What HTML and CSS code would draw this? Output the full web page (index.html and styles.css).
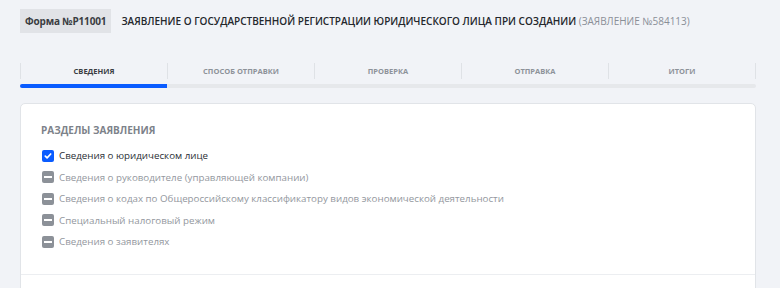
FILE: index.html
```html
<!DOCTYPE html>
<html lang="ru">
<head>
<meta charset="utf-8">
<link rel="stylesheet" href="styles.css">
</head>
<body>
<div class="page">
  <header class="head">
    <span class="badge">Форма №Р11001</span>
    <h1 class="title">ЗАЯВЛЕНИЕ О ГОСУДАРСТВЕННОЙ РЕГИСТРАЦИИ ЮРИДИЧЕСКОГО ЛИЦА ПРИ СОЗДАНИИ <span class="num">(ЗАЯВЛЕНИЕ №584113)</span></h1>
  </header>
  <nav class="steps">
    <div class="step active">СВЕДЕНИЯ</div>
    <div class="step">СПОСОБ ОТПРАВКИ</div>
    <div class="step">ПРОВЕРКА</div>
    <div class="step">ОТПРАВКА</div>
    <div class="step">ИТОГИ</div>
  </nav>
  <div class="track"><div class="fill" style="width: 20%"></div></div>
  <section class="card">
    <div class="card-body">
      <h2 class="sec-title">РАЗДЕЛЫ ЗАЯВЛЕНИЯ</h2>
      <ul class="list">
        <li class="item checked"><span class="box"><svg width="8" height="8" viewBox="0 0 8 8"><path d="M1.3 4.1 L3.1 5.9 L6.7 2" fill="none" stroke="#fff" stroke-width="1.7" stroke-linecap="round" stroke-linejoin="round"/></svg></span>Сведения о юридическом лице</li>
        <li class="item"><span class="box minus"></span>Сведения о руководителе (управляющей компании)</li>
        <li class="item"><span class="box minus"></span>Сведения о кодах по Общероссийскому классификатору видов экономической деятельности</li>
        <li class="item"><span class="box minus"></span>Специальный налоговый режим</li>
        <li class="item"><span class="box minus"></span>Сведения о заявителях</li>
      </ul>
    </div>
    <div class="card-foot"></div>
  </section>
</div>
</body>
</html>
```
FILE: styles.css
```css
* { box-sizing: border-box; }
html, body { margin: 0; padding: 0; }
body {
  background: #f1f3f7;
  font-family: "Open Sans", "Noto Sans", sans-serif;
  color: #2b2f36;
  width: 780px;
  height: 288px;
  overflow: hidden;
}
.page {
  padding: 9px 24px 0 20px;
}
.head {
  display: flex;
  align-items: center;
  gap: 10px;
  height: 24px;
}
.badge {
  flex: none;
  white-space: nowrap;
  background: #e1e3e7;
  height: 24px;
  padding: 0 5px;
  display: flex;
  align-items: center;
  font-size: 10px;
  font-weight: 700;
  letter-spacing: -0.15px;
  color: #3a3d42;
}
.title {
  margin: 0;
  font-size: 10px;
  font-weight: 600;
  color: #24272c;
  white-space: nowrap;
}
.num { color: #8a8f97; font-weight: 400; }
.steps {
  margin-top: 30px;
  display: grid;
  grid-template-columns: repeat(5, 1fr);
  border-right: 1px solid #dfe2e6;
}
.step {
  height: 16px;
  display: flex;
  align-items: center;
  justify-content: center;
  font-size: 7.5px;
  font-weight: 700;
  color: #8d9299;
  border-left: 1px solid #dfe2e6;
}
.step.active { color: #3a3d42; }
.track {
  margin-top: 5px;
  height: 4px;
  background: #e6e8eb;
  border-radius: 2px;
}
.fill {
  height: 100%;
  background: #0a5cff;
  border-radius: 2px 0 0 2px;
}
.card {
  margin-top: 15px;
  background: #fff;
  border: 1px solid #e1e4e8;
  border-radius: 5px;
}
.card-body { padding: 19px 20px 21px; }
.sec-title {
  margin: 0 0 8px;
  font-size: 10px;
  font-weight: 700;
  color: #7d828a;
  line-height: 14px;
}
.list { list-style: none; margin: 0; padding: 0; }
.item {
  display: flex;
  align-items: center;
  gap: 5px;
  height: 21.5px;
  font-size: 9.75px;
  color: #93979e;
  white-space: nowrap;
}
.item.checked { color: #2b2f36; }
.box {
  width: 12px;
  height: 12px;
  border-radius: 2px;
  background: #8c9198;
  display: flex;
  align-items: center;
  justify-content: center;
  flex: none;
  margin-left: 1px;
}
.checked .box { background: #0a5cff; }
.box.minus::before {
  content: "";
  width: 8px;
  height: 2px;
  background: #fff;
}
.card-foot {
  border-top: 1px solid #eceef1;
  height: 20px;
}
```
